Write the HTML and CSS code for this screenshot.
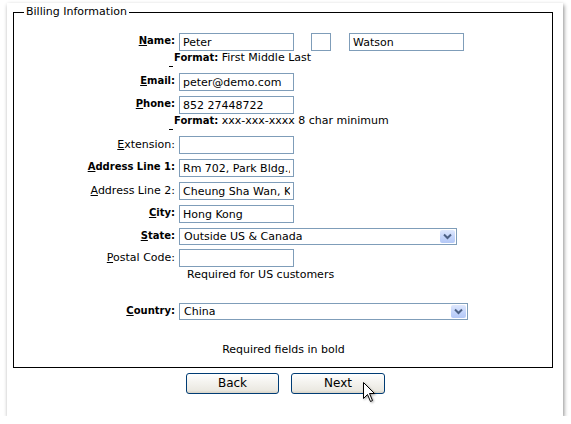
FILE: index.html
```html
<!DOCTYPE html>
<html>
<head>
<meta charset="utf-8">
<title>Billing Information</title>
<link rel="stylesheet" href="styles.css">
</head>
<body>
<div class="window">
  <fieldset class="billing">
    <legend class="legend">Billing Information</legend>
    <div class="form">
      <div class="row">
        <label class="lbl req"><u>N</u>ame:</label>
        <div class="fields">
          <input class="txt" type="text" value="Peter">
          <input class="txt mid" type="text" value="">
          <input class="txt last" type="text" value="Watson">
        </div>
      </div>
      <div class="note"><b>Format:</b> First Middle Last</div>
      <div class="dash"></div>

      <div class="row gap6">
        <label class="lbl req"><u>E</u>mail:</label>
        <div class="fields"><input class="txt" type="text" value="peter@demo.com"></div>
      </div>
      <div class="row">
        <label class="lbl req"><u>P</u>hone:</label>
        <div class="fields"><input class="txt" type="text" value="852 27448722"></div>
      </div>
      <div class="note"><b>Format:</b> xxx-xxx-xxxx 8 char minimum</div>
      <div class="dash"></div>

      <div class="row gap6">
        <label class="lbl"><u>E</u>xtension:</label>
        <div class="fields"><input class="txt" type="text" value=""></div>
      </div>
      <div class="row">
        <label class="lbl req"><u>A</u>ddress Line 1:</label>
        <div class="fields"><input class="txt" type="text" value="Rm 702, Park Bldg., 18 Cheung Lee St"></div>
      </div>
      <div class="row">
        <label class="lbl"><u>A</u>ddress Line 2:</label>
        <div class="fields"><input class="txt" type="text" value="Cheung Sha Wan, Kowloon"></div>
      </div>
      <div class="row">
        <label class="lbl req"><u>C</u>ity:</label>
        <div class="fields"><input class="txt" type="text" value="Hong Kong"></div>
      </div>
      <div class="row">
        <label class="lbl req"><u>S</u>tate:</label>
        <div class="fields">
          <div class="select state">
            <span class="sel-text">Outside US &amp; Canada</span>
            <span class="sel-arrow"><svg width="15" height="13" viewBox="0 0 15 13"><path d="M4 4.5 L7.5 8 L11 4.5" fill="none" stroke="#4d6185" stroke-width="2"/></svg></span>
          </div>
        </div>
      </div>
      <div class="row gap4">
        <label class="lbl"><u>P</u>ostal Code:</label>
        <div class="fields"><input class="txt" type="text" value=""></div>
      </div>
      <div class="note2">Required for US customers</div>

      <div class="row country-row">
        <label class="lbl req"><u>C</u>ountry:</label>
        <div class="fields">
          <div class="select country">
            <span class="sel-text">China</span>
            <span class="sel-arrow"><svg width="15" height="13" viewBox="0 0 15 13"><path d="M4 4.5 L7.5 8 L11 4.5" fill="none" stroke="#4d6185" stroke-width="2"/></svg></span>
          </div>
        </div>
      </div>
      <div class="required">Required fields in bold</div>
    </div>
  </fieldset>
  <div class="buttons">
    <button class="btn back" type="button">Back</button>
    <button class="btn next" type="button">Next</button>
  </div>
  <svg class="cursor" width="14" height="22" viewBox="0 0 14 22">
    <path d="M1.5 1.5 L1.5 17.5 L5.5 13.5 L8.5 20.5 L10.5 19.5 L7.5 12.5 L12.5 12.5 Z" fill="#fff" stroke="#000" stroke-width="1" stroke-linejoin="miter"/>
  </svg>
</div>
</body>
</html>
```

FILE: styles.css
```css
html, body {
  margin: 0;
  padding: 0;
  background: #ffffff;
}

body {
  font-family: "DejaVu Sans", Verdana, sans-serif;
  font-size: 11px;
  color: #000;
}

.window {
  position: relative;
  display: flow-root;
  margin: 3px 0 0 7px;
  width: 556px;
  height: 413px;
  background: #fff;
  box-shadow: 1px 2px 4px rgba(0, 0, 0, 0.45);
}

.billing {
  margin: 2px 0 0 6px;
  padding: 0 0 11px 0;
  width: 540px;
  box-sizing: border-box;
  border: 1px solid #000;
  min-width: 0;
}

.legend {
  margin-left: 10px;
  padding: 0 2px;
  font-size: 11px;
  line-height: 14px;
}

.form {
  padding-top: 14px;
}

.row {
  display: flex;
  align-items: flex-start;
  margin-top: 5px;
}

.row:first-child {
  margin-top: 0;
}

.row.gap6 {
  margin-top: 6px;
}

.row.gap4 {
  margin-top: 4px;
}

.row.country-row {
  margin-top: 22px;
}

.lbl {
  width: 161px;
  flex: none;
  text-align: right;
  font-size: 11px;
  line-height: 13px;
  padding-top: 2px;
  box-sizing: border-box;
  white-space: nowrap;
}

.lbl.req {
  font-weight: bold;
  font-size: 10px;
  padding-top: 1px;
}

.fields {
  display: flex;
  margin-left: 4px;
}

.txt {
  box-sizing: border-box;
  width: 115px;
  height: 18px;
  margin: 0;
  padding: 0 3px;
  border: 1px solid #7f9db9;
  background: #fff;
  font-family: "DejaVu Sans", Verdana, sans-serif;
  font-size: 11px;
  color: #000;
  outline: none;
}

.txt.mid {
  width: 20px;
  margin-left: 17px;
}

.txt.last {
  margin-left: 18px;
}

.note {
  margin: 1px 0 0 160px;
  line-height: 12px;
  font-size: 11px;
  white-space: nowrap;
}

.note b {
  font-size: 10px;
}

.dash {
  margin: 2px 0 0 155px;
  width: 4px;
  height: 1px;
  background: #000;
}

.note2 {
  margin: 1px 0 0 173px;
  line-height: 13px;
  font-size: 11px;
}

.select {
  box-sizing: border-box;
  height: 17px;
  border: 1px solid #7f9db9;
  display: flex;
  align-items: center;
  justify-content: space-between;
  background: #fff;
}

.select.state {
  width: 278px;
}

.select.country {
  width: 289px;
}

.sel-text {
  padding-left: 4px;
  line-height: 13px;
}

.sel-arrow {
  display: block;
  width: 15px;
  height: 13px;
  margin-right: 1px;
  box-sizing: border-box;
  border-radius: 2px;
  background: linear-gradient(#dfe8fd, #c3d4fb 55%, #b4c8f6);
}

.sel-arrow svg {
  display: block;
}

.required {
  margin-top: 23px;
  text-align: center;
  line-height: 13px;
  padding-left: 1px;
}

.buttons {
  display: flex;
  justify-content: center;
  gap: 12px;
  margin-top: 5px;
  padding-left: 1px;
}

.btn {
  box-sizing: border-box;
  height: 21px;
  width: 93px;
  margin: 0;
  padding: 0;
  border: 1px solid #003c74;
  border-radius: 3px;
  background: linear-gradient(#ffffff, #f5f4f0 40%, #ebe9e2 85%, #d8d3c6);
  font-family: "DejaVu Sans", Tahoma, sans-serif;
  font-size: 12px;
  color: #000;
  line-height: 19px;
}

.btn.next {
  width: 94px;
}

.cursor {
  position: absolute;
  left: 355px;
  top: 378px;
  filter: drop-shadow(1px 1px 1px rgba(0, 0, 0, 0.35));
}
```
